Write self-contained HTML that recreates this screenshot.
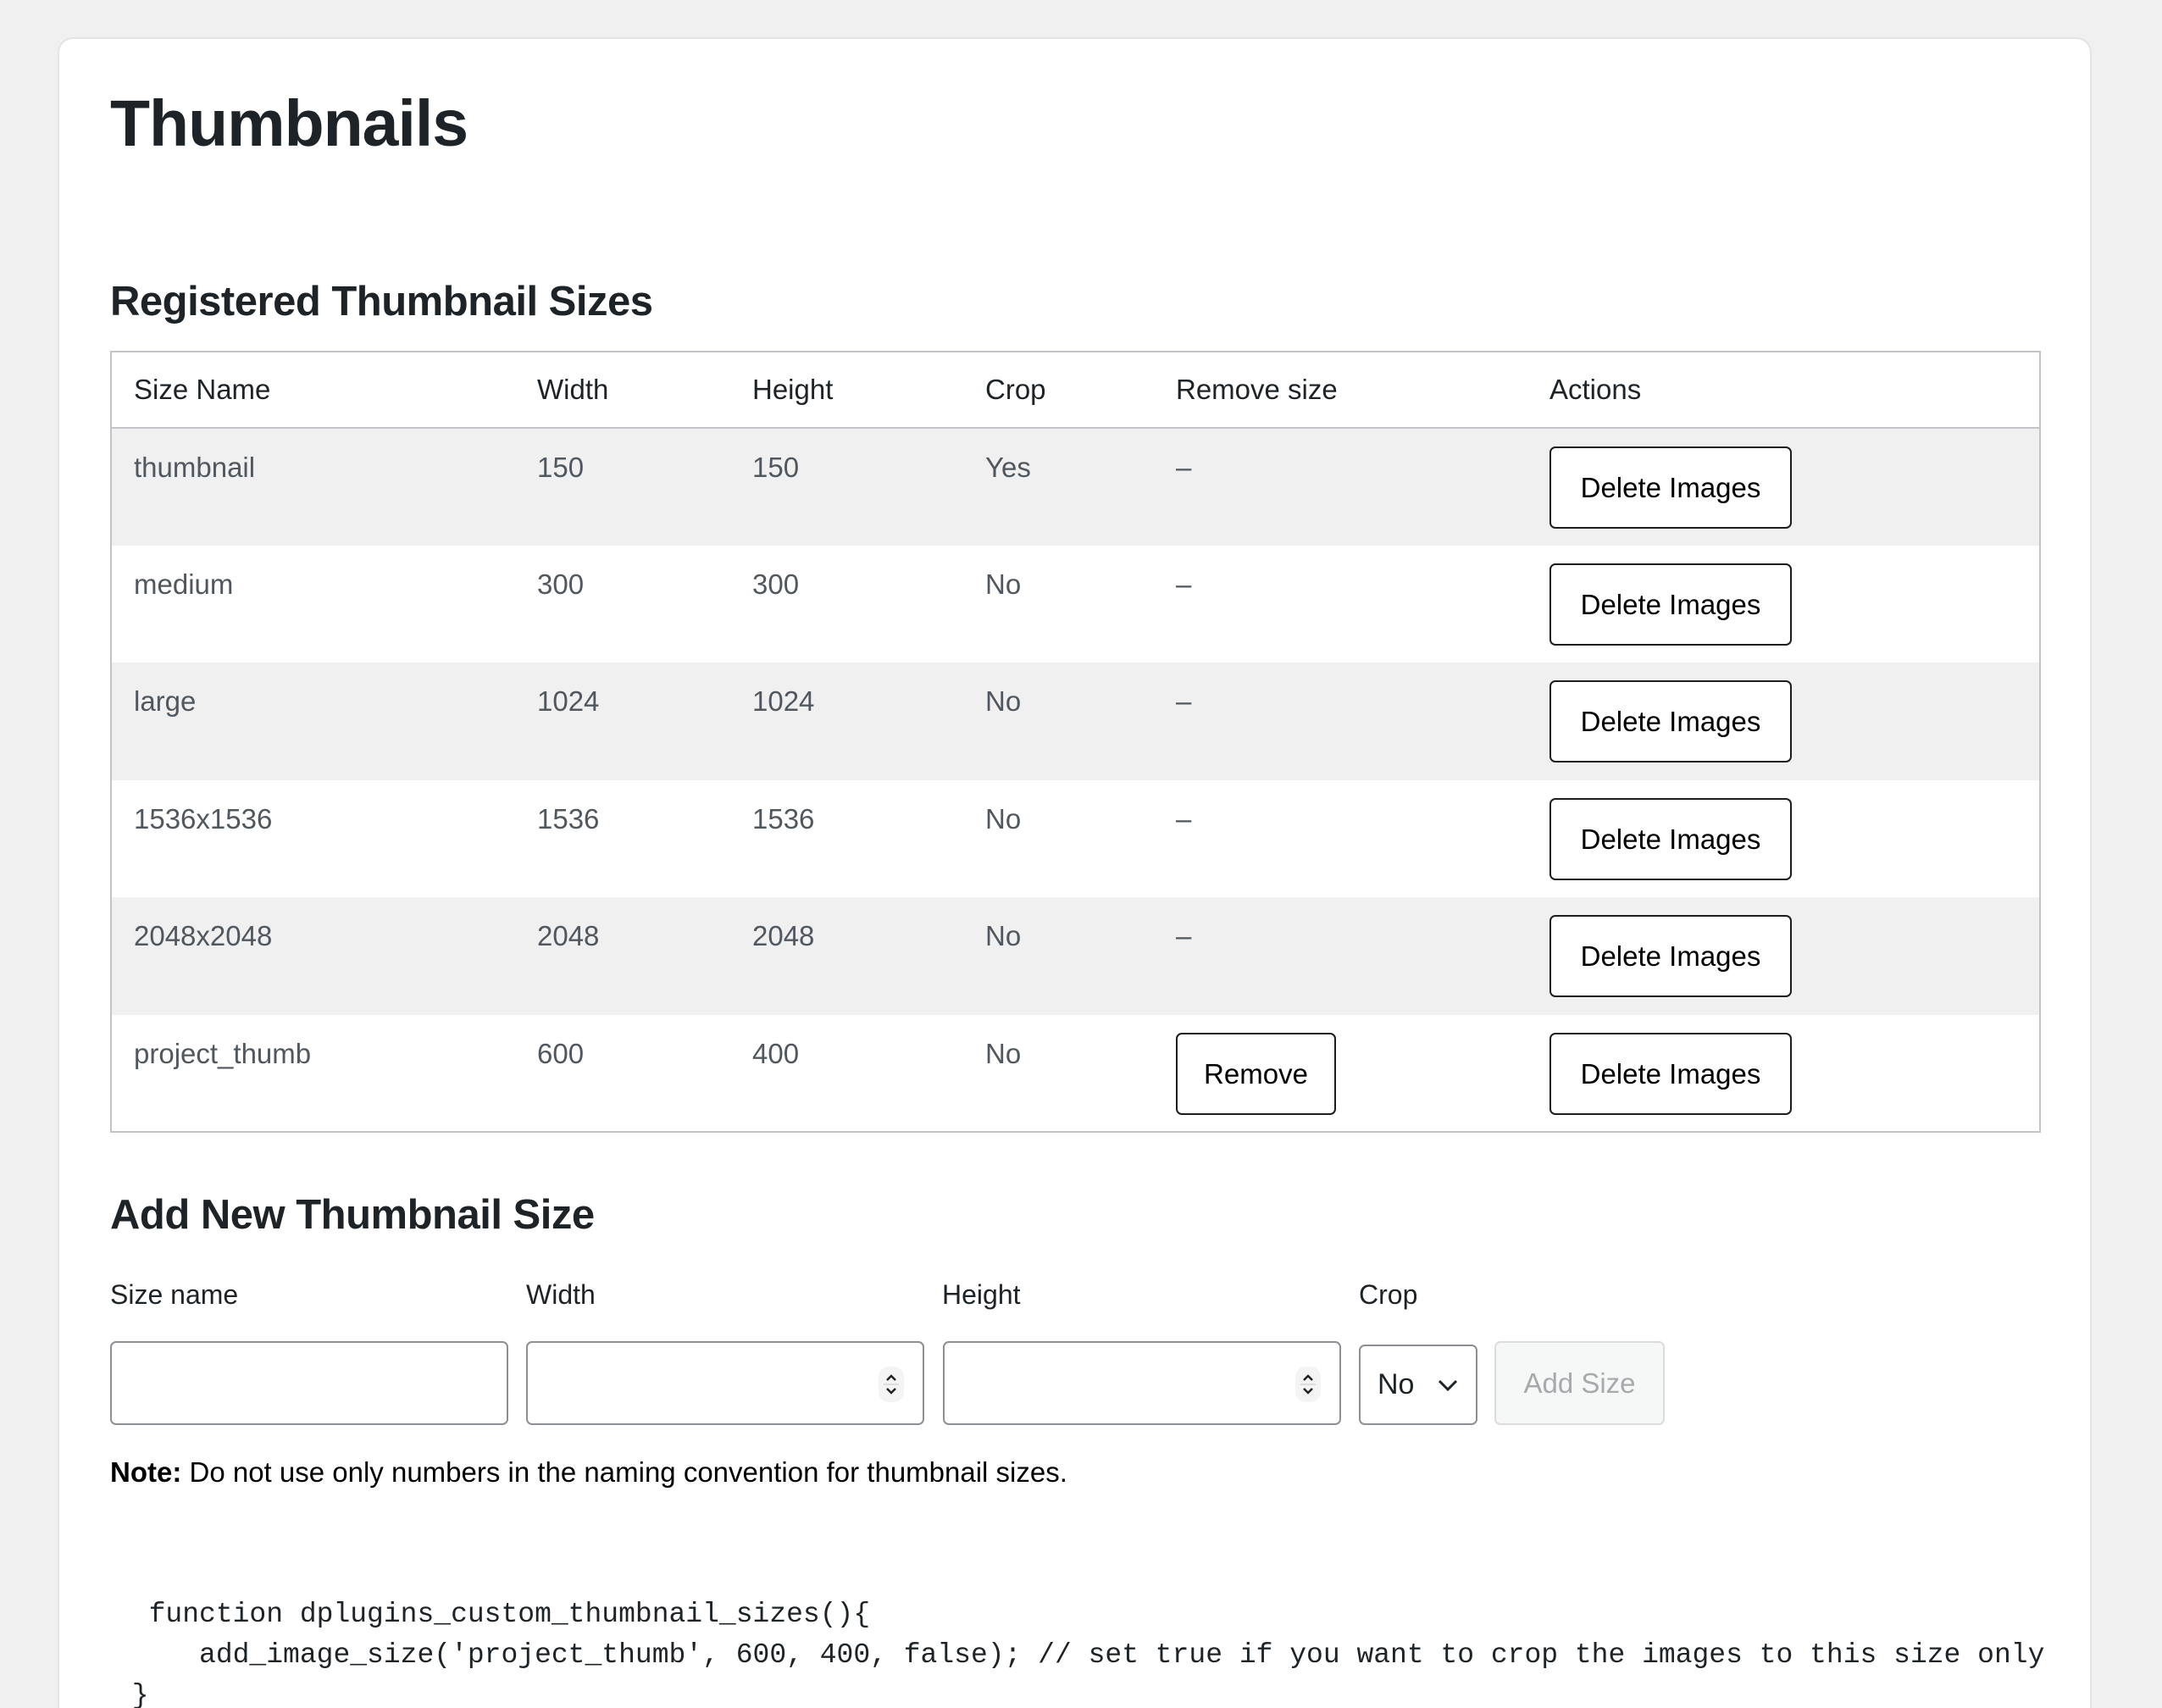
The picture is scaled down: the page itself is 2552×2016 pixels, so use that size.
<!DOCTYPE html>
<html><head><meta charset="utf-8">
<style>
*{box-sizing:border-box;margin:0;padding:0}
html,body{width:2552px;height:2016px;overflow:hidden;background:#f0f0f1;font-family:"Liberation Sans",Helvetica,Arial,sans-serif;color:#1d2327}
.card{position:absolute;left:68px;top:44px;width:2401px;height:1972px;background:#fff;border:2px solid #e4e4e6;border-bottom:none;border-radius:18px 18px 0 0;overflow:hidden}
.abs{position:absolute}
h1{position:absolute;left:60px;top:50px;font-size:77px;font-weight:bold;letter-spacing:-1px;line-height:100px}
h2{position:absolute;font-size:49px;font-weight:bold;letter-spacing:-0.5px;line-height:60px}
table{position:absolute;left:60px;top:368px;width:2279px;border:2px solid #c3c4c7;border-collapse:collapse;font-size:33px}
th{font-weight:normal;text-align:left;height:90px;padding:0 0 0 26px;color:#1d2327;border-bottom:2px solid #c3c4c7;vertical-align:middle}
td{height:138.5px;vertical-align:top;padding:26px 0 0 26px;color:#50575e;line-height:40px}
tr.s td{background:#f0f0f0}
.btn{display:inline-block;margin-top:-5px;height:97px;border:2px solid #1d1d1d;border-radius:7px;background:#fff;color:#000;font-size:33px;line-height:93px;text-align:center}
.del{width:286px}.rem{width:189px}
.lbl{position:absolute;top:1462px;font-size:32px;line-height:40px}
.inp{position:absolute;top:1537px;height:99px;width:470px;border:2px solid #8c8f94;border-radius:7px;background:#fff}
.spin{position:absolute;right:22px;top:28px;width:30px;height:42px;border-radius:12px;background:#f4f4f4}
pre{position:absolute;left:66px;top:1836px;font-family:"Liberation Mono","DejaVu Sans Mono",monospace;font-size:33px;line-height:48px;color:#1d2327;white-space:pre}
</style></head><body>
<div class="card">
<h1>Thumbnails</h1>
<h2 style="left:60px;top:280px">Registered Thumbnail Sizes</h2>
<table>
<colgroup><col style="width:477px"><col style="width:254px"><col style="width:275px"><col style="width:225px"><col style="width:441px"><col></colgroup>
<tr><th>Size Name</th><th>Width</th><th>Height</th><th>Crop</th><th>Remove size</th><th>Actions</th></tr>
<tr class="s"><td>thumbnail</td><td>150</td><td>150</td><td>Yes</td><td>–</td><td><span class="btn del">Delete Images</span></td></tr>
<tr><td>medium</td><td>300</td><td>300</td><td>No</td><td>–</td><td><span class="btn del">Delete Images</span></td></tr>
<tr class="s"><td>large</td><td>1024</td><td>1024</td><td>No</td><td>–</td><td><span class="btn del">Delete Images</span></td></tr>
<tr><td>1536x1536</td><td>1536</td><td>1536</td><td>No</td><td>–</td><td><span class="btn del">Delete Images</span></td></tr>
<tr class="s"><td>2048x2048</td><td>2048</td><td>2048</td><td>No</td><td>–</td><td><span class="btn del">Delete Images</span></td></tr>
<tr><td>project_thumb</td><td>600</td><td>400</td><td>No</td><td><span class="btn rem">Remove</span></td><td><span class="btn del">Delete Images</span></td></tr>
</table>
<h2 style="left:60px;top:1358px">Add New Thumbnail Size</h2>
<div class="lbl" style="left:60px">Size name</div>
<div class="lbl" style="left:551px">Width</div>
<div class="lbl" style="left:1042px">Height</div>
<div class="lbl" style="left:1534px">Crop</div>
<div class="inp" style="left:60px"></div>
<div class="inp" style="left:551px"><div class="spin"><svg width="30" height="42" viewBox="0 0 30 42"><path d="M10 16 L15 11 L20 16 M10 26 L15 31 L20 26" fill="none" stroke="#222" stroke-width="2.5"/><path d="M6 21 H24" stroke="#ddd" stroke-width="2"/></svg></div></div>
<div class="inp" style="left:1043px"><div class="spin"><svg width="30" height="42" viewBox="0 0 30 42"><path d="M10 16 L15 11 L20 16 M10 26 L15 31 L20 26" fill="none" stroke="#222" stroke-width="2.5"/><path d="M6 21 H24" stroke="#ddd" stroke-width="2"/></svg></div></div>
<div class="inp" style="left:1534px;top:1541px;height:95px;width:140px;font-size:34px;line-height:91px;padding-left:20px;color:#1d2327">No
<svg style="position:absolute;right:20px;top:38px" width="26" height="16" viewBox="0 0 26 16"><path d="M3 3 L13 13 L23 3" fill="none" stroke="#1d2327" stroke-width="3"/></svg></div>
<div class="inp" style="left:1694px;width:201px;background:#f6f7f7;border-color:#dcdcde;color:#a7aaad;font-size:33px;line-height:95px;text-align:center">Add Size</div>
<div class="abs" style="left:60px;top:1672px;font-size:33px;line-height:40px;color:#000"><b>Note:</b> Do not use only numbers in the naming convention for thumbnail sizes.</div>
<pre>  function dplugins_custom_thumbnail_sizes(){
     add_image_size('project_thumb', 600, 400, false); // set true if you want to crop the images to this size only
 }</pre>
</div>
</body></html>
